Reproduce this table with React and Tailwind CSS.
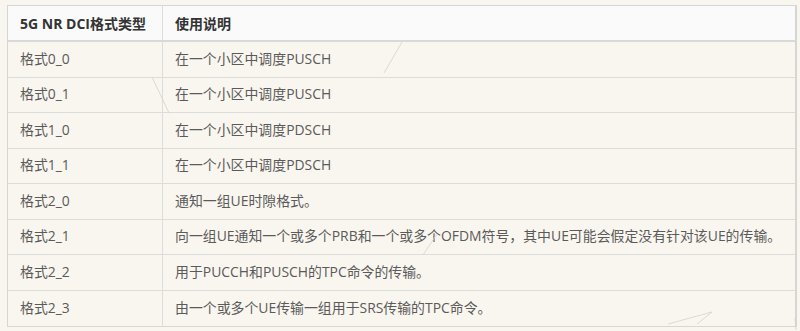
const ROWS = [
  ['格式0_0', '在一个小区中调度PUSCH'],
  ['格式0_1', '在一个小区中调度PUSCH'],
  ['格式1_0', '在一个小区中调度PDSCH'],
  ['格式1_1', '在一个小区中调度PDSCH'],
  ['格式2_0', '通知一组UE时隙格式。'],
  ['格式2_1', '向一组UE通知一个或多个PRB和一个或多个OFDM符号，其中UE可能会假定没有针对该UE的传输。'],
  ['格式2_2', '用于PUCCH和PUSCH的TPC命令的传输。'],
  ['格式2_3', '由一个或多个UE传输一组用于SRS传输的TPC命令。'],
]

const font = { fontFamily: '"Open Sans", "Noto Sans CJK SC", sans-serif' }

export default function App() {
  return (
    <div className="relative w-[800px] h-[331px] bg-[#f9f6ef] pt-[5px] pl-[7px]" style={font}>
      <div className="w-[790px] border border-[#d6d6d4] border-r-2 text-[13.9px] text-[#5a5a5a]">
        <div className="flex h-[36px] bg-[#fafafa] border-b-2 border-[#d9d9d7] font-bold text-[14px] text-[#333]">
          <div className="w-[155px] flex items-center pl-[12px] border-r border-[#dcdcda] whitespace-nowrap">5G NR DCI格式类型</div>
          <div className="flex-1 flex items-center pl-[12px]">使用说明</div>
        </div>
        {ROWS.map(([k, v], i) => (
          <div key={k} className={`flex h-[35.5px] ${i < ROWS.length - 1 ? 'border-b border-[#dcdcda]' : ''}`}>
            <div className="w-[155px] flex items-center pl-[12px] border-r border-[#dcdcda]">{k}</div>
            <div className="flex-1 flex items-center pl-[12px] whitespace-nowrap">{v}</div>
          </div>
        ))}
      </div>

      {/* faint scratches on the scan */}
      <svg className="absolute inset-0 pointer-events-none" width="800" height="331">
        <g stroke="#d4d2cc" strokeWidth="0.8" fill="none">
          <line x1="152" y1="77" x2="169" y2="113" />
          <line x1="402" y1="42" x2="384" y2="73" />
          <line x1="437" y1="234" x2="423" y2="255" />
          <polyline points="668,324 712,312 697,324" />
          <line x1="795" y1="318" x2="796" y2="330" />
        </g>
      </svg>
    </div>
  )
}
